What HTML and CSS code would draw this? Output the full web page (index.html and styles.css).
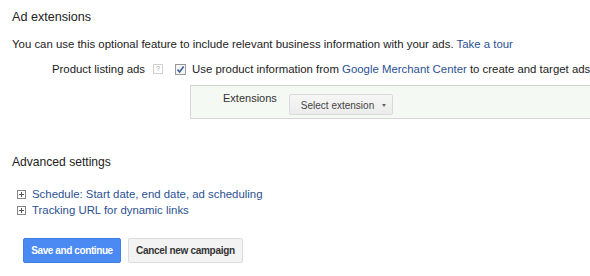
FILE: index.html
```html
<!DOCTYPE html>
<html lang="en">
<head>
    <meta charset="UTF-8">
    <title>Ad extensions</title>
    <link rel="stylesheet" href="styles.css">
</head>
<body>
    <div class="page">
        <h2 class="section-title">Ad extensions</h2>
        <p class="intro">You can use this optional feature to include relevant business information with your ads. <a href="#">Take a tour</a></p>

        <div class="field-row">
            <div class="field-label">Product listing ads <span class="help">?</span></div>
            <div class="field-body">
                <label class="check">
                    <span class="checkbox">
                        <svg width="9" height="9" viewBox="0 0 9 9"><path d="M1.5 4.5 L3.6 7 L7.6 1.6" fill="none" stroke="#3b5f9a" stroke-width="1.6"/></svg>
                    </span>
                    <span>Use product information from <a href="#">Google Merchant Center</a> to create and target ads</span>
                </label>
                <div class="ext-box">
                    <span class="ext-label">Extensions</span>
                    <button class="select-btn">Select extension <span class="caret"></span></button>
                </div>
            </div>
        </div>

        <h2 class="section-title advanced">Advanced settings</h2>
        <ul class="toggles">
            <li><span class="plus"></span><a href="#">Schedule: Start date, end date, ad scheduling</a></li>
            <li><span class="plus"></span><a href="#">Tracking URL for dynamic links</a></li>
        </ul>

        <div class="actions">
            <button class="btn primary">Save and continue</button>
            <button class="btn">Cancel new campaign</button>
        </div>
    </div>
</body>
</html>
```

FILE: styles.css
```css
body {
    margin: 0;
    background: #fff;
    font-family: 'Liberation Sans', Arial, sans-serif;
    color: #222;
    overflow: hidden;
}

.page {
    padding: 10px 0 0 12px;
}

a {
    color: #2b5192;
    text-decoration: none;
}

.section-title {
    margin: 0;
    font-size: 12.6px;
    line-height: 15px;
    font-weight: normal;
    color: #222;
}

.section-title.advanced {
    margin-top: 36px;
    font-size: 12.1px;
}

.intro {
    margin: 12px 0 0;
    font-size: 11.4px;
    line-height: 14px;
}

.field-row {
    display: flex;
    margin-top: 11px;
    font-size: 11.4px;
    line-height: 14px;
}

.field-label {
    display: flex;
    justify-content: flex-end;
    align-items: center;
    align-self: flex-start;
    width: 163px;
    height: 14px;
    padding-right: 12px;
    box-sizing: border-box;
}

.help {
    display: inline-block;
    width: 8px;
    height: 8px;
    margin-left: 8px;
    border: 1px solid #d0d0d0;
    font-size: 7px;
    line-height: 8px;
    text-align: center;
    color: #999;
}

.field-body {
    flex: 1;
    min-width: 0;
}

.check {
    display: flex;
    align-items: center;
    white-space: nowrap;
}

.checkbox {
    display: inline-flex;
    align-items: center;
    justify-content: center;
    width: 9px;
    height: 9px;
    margin-right: 6px;
    border: 1px solid #999;
    background: #f4f4f4;
}

.ext-box {
    display: flex;
    align-items: flex-start;
    margin: 9px -20px 0 15px;
    padding: 5px 0 3px 32px;
    height: 24px;
    border: 1px solid #d6d6d6;
    border-right: none;
    background: #f5f9f3;
}

.ext-label {
    font-size: 11px;
    line-height: 14px;
    color: #333;
    margin-right: 12px;
}

.select-btn {
    display: flex;
    align-items: center;
    margin-top: 3px;
    height: 21px;
    width: 104px;
    padding: 1px 0 0 11px;
    border: 1px solid #dadada;
    border-radius: 2px;
    background: linear-gradient(#f6f6f6, #ececec);
    font-family: 'Liberation Sans', Arial, sans-serif;
    font-size: 10px;
    color: #444;
    white-space: nowrap;
    box-sizing: border-box;
}

.caret {
    margin-left: 8px;
    border-left: 2.5px solid transparent;
    border-right: 2.5px solid transparent;
    border-top: 3px solid #666;
}

.toggles {
    list-style: none;
    margin: 16px 0 0;
    padding: 0;
    font-size: 11.4px;
    line-height: 16px;
}

.toggles li {
    display: flex;
    align-items: center;
}

.plus {
    position: relative;
    width: 7px;
    height: 7px;
    margin: 0 6px 0 5px;
    border: 1px solid #888;
    background: #fff;
}

.plus::before,
.plus::after {
    content: '';
    position: absolute;
    background: #555;
}

.plus::before {
    left: 1px;
    right: 1px;
    top: 3px;
    height: 1px;
}

.plus::after {
    top: 1px;
    bottom: 1px;
    left: 3px;
    width: 1px;
}

.actions {
    display: flex;
    gap: 7px;
    margin: 20px 0 0 11px;
}

.btn {
    height: 25px;
    padding: 0 7px;
    border: 1px solid #dcdcdc;
    border-radius: 2px;
    background: #f3f3f3;
    font-family: 'Liberation Sans', Arial, sans-serif;
    font-size: 10px;
    font-weight: bold;
    letter-spacing: -0.3px;
    color: #333;
    white-space: nowrap;
}

.btn.primary {
    width: 98px;
    padding: 0;
    border-color: #3f7fe6;
    background: #4a8af2;
    color: #fff;
    letter-spacing: -0.4px;
}
```
